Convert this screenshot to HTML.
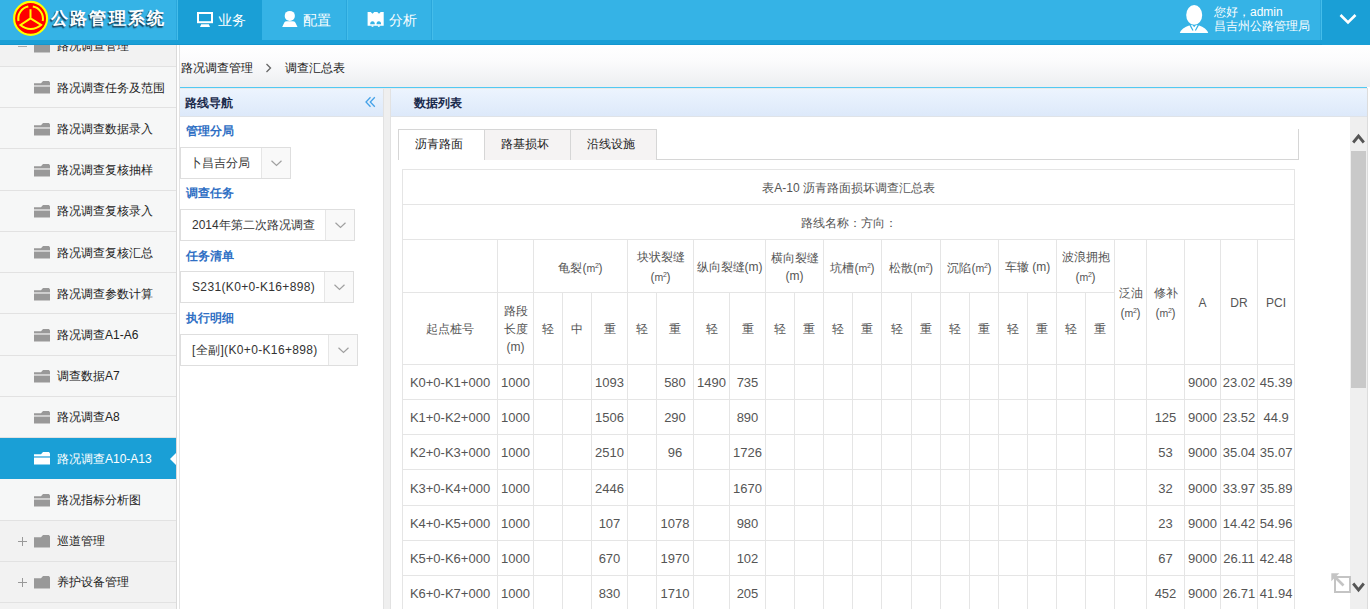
<!DOCTYPE html><html><head><meta charset="utf-8"><style>
*{box-sizing:border-box}
html,body{margin:0;padding:0}
body{width:1370px;height:609px;overflow:hidden;position:relative;background:#fff;font-family:"Liberation Sans",sans-serif;font-size:12px;color:#222}
div,span,svg{position:absolute}
.sep{top:0;height:40px;width:2px;border-left:1px solid #2aa7dc;background:#45bdea}
.nt{top:10px;height:20px;line-height:20px;color:#fff;font-size:14px;white-space:nowrap}
.row{left:0;width:176px;border-bottom:1px solid #e2e2e2;color:#222;white-space:nowrap}
.row span{left:57px;line-height:16px}
.child{background:#f6f7f7}
.par{background:#f2f2f2}
.act{background:#1a9fd6;color:#fff;border-bottom-color:#1a9fd6}
.lbl{left:186px;font-weight:bold;color:#2f6fc4;font-size:12px;line-height:14px}
.sel{left:180px;height:32px;border:1px solid #dedede;background:#fff}
.sel span{left:11px;top:8px;line-height:14px;font-size:12px;color:#333;white-space:nowrap}
.sel .btn{top:0;right:0;width:29px;height:30px;border-left:1px solid #e6e6e6;background:#f9f9f9}
.tab{top:129px;height:31px;border:1px solid #d6d6d6;border-bottom:0;background:#f5f3f3;font-size:12px;color:#222;line-height:29px;padding-left:16px}
table{position:absolute;left:402px;top:169px;border-collapse:collapse;table-layout:fixed;font-size:12px;color:#555}
td{border:1px solid #e5e5e5;text-align:center;padding:1px 0 0 0;overflow:hidden;line-height:18px}
.m2{font-style:normal;font-size:10.5px;letter-spacing:-0.3px}
.m2 b{font-weight:normal;font-size:7px;vertical-align:4px}
td.d{font-size:13px;padding-top:2px}
</style></head><body>
<div style="left:0;top:0;width:1370px;height:40px;background:#35b3e6"></div>
<div style="left:0;top:40px;width:1370px;height:5px;background:#1a9fd6;border-bottom:1px solid #1296cf"></div>
<div style="left:1322px;top:0;width:48px;height:45px;background:#1a9fd6"></div>
<div style="left:178px;top:0;width:84px;height:40px;background:#1a9fd6"></div>
<div class="sep" style="left:176px"></div>
<div class="sep" style="left:346px"></div>
<div class="sep" style="left:431px"></div>
<div class="sep" style="left:1320px"></div>
<svg style="left:0;top:0" width="60" height="40" viewBox="0 0 60 40">
<circle cx="30.6" cy="18.4" r="16.5" fill="#ff0000" stroke="#ffff00" stroke-width="2.1"/>
<g fill="none" stroke="#ffff00" stroke-width="2" stroke-linecap="butt">
<path d="M18.5 21 A12.2 12.2 0 0 1 28.3 6.6"/>
<path d="M32.8 6.6 A12.2 12.2 0 0 1 42.7 21"/>
<path d="M30.5 9.2 V18.4 L20.4 25 A15.7 15.7 0 0 0 41.1 25 L30.5 18.4"/>
</g></svg>
<div style="left:51px;top:9px;font-size:17px;line-height:20px;font-weight:bold;color:#fff;letter-spacing:2.2px;white-space:nowrap;text-shadow:-1px 1px 0 #1b4a64,-1px 2px 1px rgba(20,60,85,0.7)">公路管理系统</div>
<svg style="left:196px;top:11px" width="18" height="17" viewBox="0 0 18 17">
<rect x="2" y="2" width="14" height="9.2" fill="none" stroke="#fff" stroke-width="2"/>
<path d="M5.2 13.2 H12.8 L14 16 H4 Z" fill="#fff"/></svg>
<div class="nt" style="left:218px">业务</div>
<svg style="left:282px;top:10px" width="17" height="18" viewBox="0 0 17 18">
<ellipse cx="7.8" cy="5.9" rx="5.1" ry="5" fill="#fff"/><path d="M0.2 17 L2.3 12.6 Q3 11.2 4.8 11.2 H10.8 Q12.6 11.2 13.3 12.6 L15.5 17 Z" fill="#fff"/></svg>
<div class="nt" style="left:303px">配置</div>
<svg style="left:367px;top:12px" width="18" height="16" viewBox="0 0 18 16">
<path d="M0.6 0 H3.8 L5.5 1.8 L7.2 0 H10.3 L12 1.8 L13.7 0 H16.7 V13.7 H0.6 Z" fill="#fff"/>
<path d="M3.2 12.2 A2.3 2.9 0 0 1 7.8 12.2 Z M9.5 12.2 A2.3 2.9 0 0 1 14.1 12.2 Z" fill="#35b3e6"/>
<rect x="4.6" y="13.5" width="1.8" height="1.3" fill="#fff"/><rect x="10.9" y="13.5" width="1.8" height="1.3" fill="#fff"/></svg>
<div class="nt" style="left:389px">分析</div>
<svg style="left:1179px;top:4px" width="30" height="30" viewBox="0 0 30 30">
<ellipse cx="15.2" cy="11" rx="8" ry="9.9" fill="#fff"/>
<path d="M0.8 29 Q2.5 24 10.8 21.3 L15.2 21 L19.6 21.3 Q27.5 24 29.2 29 Z" fill="#fff"/>
<path d="M10.8 20.6 L14 26.5 M19.6 20.6 L16.4 26.5" fill="none" stroke="#35b3e6" stroke-width="1.2"/><path d="M13.2 20.8 L15.2 23.2 L17.2 20.8 Z" fill="#35b3e6"/></svg>
<div style="left:1214px;top:5px;color:#fff;font-size:12px;line-height:14px;white-space:nowrap">您好，admin</div>
<div style="left:1214px;top:19px;color:#fff;font-size:12px;line-height:14px;white-space:nowrap">昌吉州公路管理局</div>
<svg style="left:1339px;top:13px" width="18" height="12" viewBox="0 0 18 12">
<path d="M1.5 2 L9 9.5 L16.5 2" fill="none" stroke="#fff" stroke-width="2.6"/></svg>
<div style="left:0;top:45px;width:176px;height:564px;background:#f2f2f2;overflow:hidden">
<div class="row par" style="top:-19.23px;height:41.23px"><span style="top:12.61px">路况调查管理</span></div>
<div style="left:18px;top:0.9px;width:9px;height:1px;background:#aaa"></div>
<svg style="left:34px;top:-4.6px" width="16" height="13" viewBox="0 0 16 13"><path d="M0 2.2 H7 L9 0 H15 L16 1.4 V12.5 H0 Z" fill="#999"/></svg>
<div class="row child" style="top:22.00px;height:41.23px"><span style="top:12.61px">路况调查任务及范围</span></div>
<svg style="left:34px;top:36.3px" width="16" height="13" viewBox="0 0 16 13"><path d="M0 2.2 H7 L9 0 H15 L16 1.4 V4.2 H0 Z" fill="#999"/><rect x="0" y="4.2" width="16" height="1.8" fill="#cdcdcd"/><rect x="0" y="6" width="16" height="6.5" fill="#999"/></svg>
<div class="row child" style="top:63.23px;height:41.23px"><span style="top:12.61px">路况调查数据录入</span></div>
<svg style="left:34px;top:77.5px" width="16" height="13" viewBox="0 0 16 13"><path d="M0 2.2 H7 L9 0 H15 L16 1.4 V4.2 H0 Z" fill="#999"/><rect x="0" y="4.2" width="16" height="1.8" fill="#cdcdcd"/><rect x="0" y="6" width="16" height="6.5" fill="#999"/></svg>
<div class="row child" style="top:104.46px;height:41.23px"><span style="top:12.61px">路况调查复核抽样</span></div>
<svg style="left:34px;top:118.8px" width="16" height="13" viewBox="0 0 16 13"><path d="M0 2.2 H7 L9 0 H15 L16 1.4 V4.2 H0 Z" fill="#999"/><rect x="0" y="4.2" width="16" height="1.8" fill="#cdcdcd"/><rect x="0" y="6" width="16" height="6.5" fill="#999"/></svg>
<div class="row child" style="top:145.69px;height:41.23px"><span style="top:12.61px">路况调查复核录入</span></div>
<svg style="left:34px;top:160.0px" width="16" height="13" viewBox="0 0 16 13"><path d="M0 2.2 H7 L9 0 H15 L16 1.4 V4.2 H0 Z" fill="#999"/><rect x="0" y="4.2" width="16" height="1.8" fill="#cdcdcd"/><rect x="0" y="6" width="16" height="6.5" fill="#999"/></svg>
<div class="row child" style="top:186.92px;height:41.23px"><span style="top:12.61px">路况调查复核汇总</span></div>
<svg style="left:34px;top:201.2px" width="16" height="13" viewBox="0 0 16 13"><path d="M0 2.2 H7 L9 0 H15 L16 1.4 V4.2 H0 Z" fill="#999"/><rect x="0" y="4.2" width="16" height="1.8" fill="#cdcdcd"/><rect x="0" y="6" width="16" height="6.5" fill="#999"/></svg>
<div class="row child" style="top:228.15px;height:41.23px"><span style="top:12.61px">路况调查参数计算</span></div>
<svg style="left:34px;top:242.5px" width="16" height="13" viewBox="0 0 16 13"><path d="M0 2.2 H7 L9 0 H15 L16 1.4 V4.2 H0 Z" fill="#999"/><rect x="0" y="4.2" width="16" height="1.8" fill="#cdcdcd"/><rect x="0" y="6" width="16" height="6.5" fill="#999"/></svg>
<div class="row child" style="top:269.38px;height:41.23px"><span style="top:12.61px">路况调查A1-A6</span></div>
<svg style="left:34px;top:283.7px" width="16" height="13" viewBox="0 0 16 13"><path d="M0 2.2 H7 L9 0 H15 L16 1.4 V4.2 H0 Z" fill="#999"/><rect x="0" y="4.2" width="16" height="1.8" fill="#cdcdcd"/><rect x="0" y="6" width="16" height="6.5" fill="#999"/></svg>
<div class="row child" style="top:310.61px;height:41.23px"><span style="top:12.61px">调查数据A7</span></div>
<svg style="left:34px;top:324.9px" width="16" height="13" viewBox="0 0 16 13"><path d="M0 2.2 H7 L9 0 H15 L16 1.4 V4.2 H0 Z" fill="#999"/><rect x="0" y="4.2" width="16" height="1.8" fill="#cdcdcd"/><rect x="0" y="6" width="16" height="6.5" fill="#999"/></svg>
<div class="row child" style="top:351.84px;height:41.23px"><span style="top:12.61px">路况调查A8</span></div>
<svg style="left:34px;top:366.2px" width="16" height="13" viewBox="0 0 16 13"><path d="M0 2.2 H7 L9 0 H15 L16 1.4 V4.2 H0 Z" fill="#999"/><rect x="0" y="4.2" width="16" height="1.8" fill="#cdcdcd"/><rect x="0" y="6" width="16" height="6.5" fill="#999"/></svg>
<div class="row act" style="top:393.07px;height:41.23px"><span style="top:12.61px">路况调查A10-A13</span></div>
<svg style="left:34px;top:407.4px" width="16" height="13" viewBox="0 0 16 13"><path d="M0 2.2 H7 L9 0 H15 L16 1.4 V4.2 H0 Z" fill="#fff"/><rect x="0" y="4.2" width="16" height="1.8" fill="#7cc6ea"/><rect x="0" y="6" width="16" height="6.5" fill="#fff"/></svg>
<div class="row child" style="top:434.30px;height:41.23px"><span style="top:12.61px">路况指标分析图</span></div>
<svg style="left:34px;top:448.6px" width="16" height="13" viewBox="0 0 16 13"><path d="M0 2.2 H7 L9 0 H15 L16 1.4 V4.2 H0 Z" fill="#999"/><rect x="0" y="4.2" width="16" height="1.8" fill="#cdcdcd"/><rect x="0" y="6" width="16" height="6.5" fill="#999"/></svg>
<div class="row par" style="top:475.53px;height:41.23px"><span style="top:12.61px">巡道管理</span></div>
<div style="left:18px;top:495.6px;width:9px;height:1px;background:#999"></div>
<div style="left:22px;top:491.6px;width:1px;height:9px;background:#999"></div>
<svg style="left:34px;top:489.6px" width="16" height="13" viewBox="0 0 16 13"><path d="M0 2.2 H7 L9 0 H15 L16 1.4 V12.5 H0 Z" fill="#999"/></svg>
<div class="row par" style="top:516.76px;height:41.23px"><span style="top:12.61px">养护设备管理</span></div>
<div style="left:18px;top:536.9px;width:9px;height:1px;background:#999"></div>
<div style="left:22px;top:532.9px;width:1px;height:9px;background:#999"></div>
<svg style="left:34px;top:530.9px" width="16" height="13" viewBox="0 0 16 13"><path d="M0 2.2 H7 L9 0 H15 L16 1.4 V12.5 H0 Z" fill="#999"/></svg>
<div class="row par" style="top:557.99px;height:41.23px"><span style="top:12.61px"></span></div>
<svg style="left:170px;top:407.7px" width="6" height="12" viewBox="0 0 6 12"><path d="M6 0 L0 6 L6 12 Z" fill="#fff"/></svg>
</div>
<div style="left:176px;top:45px;width:1px;height:564px;background:#dadada"></div>
<div style="left:177px;top:45px;width:2px;height:564px;background:#fff"></div>
<div style="left:179px;top:45px;width:1px;height:564px;background:#e3e3e3"></div>
<div style="left:180px;top:45px;width:1190px;height:42px;background:linear-gradient(#ffffff,#fbfbfc 40%,#eceef1)"></div>
<div style="left:181px;top:61px;line-height:14px;white-space:nowrap">路况调查管理</div>
<svg style="left:265px;top:63px" width="8" height="10" viewBox="0 0 8 10"><path d="M1.5 1 L5.5 5 L1.5 9" fill="none" stroke="#666" stroke-width="1.3"/></svg>
<div style="left:285px;top:61px;line-height:14px;white-space:nowrap">调查汇总表</div>
<div style="left:180px;top:87px;width:1187px;height:1px;background:#52c9f3"></div>
<div style="left:180px;top:88px;width:1190px;height:521px;background:#e9e9e9"></div>
<div style="left:180px;top:89px;width:203px;height:520px;background:#fff"></div>
<div style="left:180px;top:89px;width:203px;height:28px;background:linear-gradient(#ecf4fe,#dde9fa);border-bottom:1px solid #dfe3e8"></div>
<div style="left:185px;top:96px;font-weight:bold;color:#1a2a4c;line-height:14px">路线导航</div>
<svg style="left:365px;top:96px" width="12" height="12" viewBox="0 0 12 12"><path d="M5.5 1.3 L1 6 L5.5 10.7 M9.8 1.3 L5.3 6 L9.8 10.7" fill="none" stroke="#45a2e8" stroke-width="1.3"/></svg>
<div class="lbl" style="top:124px">管理分局</div>
<div class="lbl" style="top:186px">调查任务</div>
<div class="lbl" style="top:249px">任务清单</div>
<div class="lbl" style="top:311px">执行明细</div>
<div class="sel" style="top:147px;width:111px"><span style="left:9px">卜昌吉分局</span><div class="btn"></div></div>
<svg style="left:271px;top:160px" width="11" height="7" viewBox="0 0 11 7"><path d="M0.5 0.8 L5.5 5.5 L10.5 0.8" fill="none" stroke="#a0a0a0" stroke-width="1.2"/></svg>
<div class="sel" style="top:209px;width:175px"><span>2014年第二次路况调查</span><div class="btn"></div></div>
<svg style="left:335px;top:222px" width="11" height="7" viewBox="0 0 11 7"><path d="M0.5 0.8 L5.5 5.5 L10.5 0.8" fill="none" stroke="#a0a0a0" stroke-width="1.2"/></svg>
<div class="sel" style="top:271px;width:174px"><span style="letter-spacing:0.35px">S231(K0+0-K16+898)</span><div class="btn"></div></div>
<svg style="left:334px;top:284px" width="11" height="7" viewBox="0 0 11 7"><path d="M0.5 0.8 L5.5 5.5 L10.5 0.8" fill="none" stroke="#a0a0a0" stroke-width="1.2"/></svg>
<div class="sel" style="top:334px;width:178px"><span style="letter-spacing:0.35px">[全副](K0+0-K16+898)</span><div class="btn"></div></div>
<svg style="left:338px;top:347px" width="11" height="7" viewBox="0 0 11 7"><path d="M0.5 0.8 L5.5 5.5 L10.5 0.8" fill="none" stroke="#a0a0a0" stroke-width="1.2"/></svg>
<div style="left:383px;top:89px;width:1px;height:520px;background:#e2e2e2"></div>
<div style="left:384px;top:89px;width:6px;height:520px;background:#efefef"></div>
<div style="left:390px;top:89px;width:1px;height:520px;background:#e2e2e2"></div>
<div style="left:391px;top:89px;width:976px;height:520px;background:#fff"></div>
<div style="left:391px;top:89px;width:976px;height:28px;background:linear-gradient(#ecf4fe,#dde9fa);border-bottom:1px solid #dfe3e8"></div>
<div style="left:414px;top:96px;font-weight:bold;color:#1a2a4c;line-height:14px">数据列表</div>
<div style="left:1367px;top:88px;width:1px;height:521px;background:#dcdcdc"></div>
<div style="left:1368px;top:88px;width:2px;height:521px;background:#fff"></div>
<div style="left:656px;top:159px;width:643px;height:1px;background:#d6d6d6"></div>
<div style="left:1298px;top:129px;width:1px;height:31px;background:#d6d6d6"></div>
<div class="tab" style="left:398px;width:87px;background:#fff">沥青路面</div>
<div class="tab" style="left:484px;width:87px">路基损坏</div>
<div class="tab" style="left:570px;width:87px">沿线设施</div>
<table style="width:893px"><colgroup><col style="width:95px"><col style="width:36px"><col style="width:29px"><col style="width:29px"><col style="width:36px"><col style="width:29px"><col style="width:37px"><col style="width:36px"><col style="width:36px"><col style="width:29px"><col style="width:29px"><col style="width:29px"><col style="width:29px"><col style="width:30px"><col style="width:29px"><col style="width:29px"><col style="width:29px"><col style="width:29px"><col style="width:29px"><col style="width:29px"><col style="width:29px"><col style="width:32px"><col style="width:38px"><col style="width:36px"><col style="width:37px"><col style="width:37px"></colgroup><tr style="height:35px"><td colspan="26">表A-10 沥青路面损坏调查汇总表</td></tr><tr style="height:35px"><td colspan="26">路线名称：方向：</td></tr><tr style="height:53px"><td></td><td></td><td colspan="3">龟裂(<i class="m2">m<b>2</b></i>)</td><td colspan="2">块状裂缝<br>(<i class="m2">m<b>2</b></i>)</td><td colspan="2">纵向裂缝(m)</td><td colspan="2">横向裂缝<br>(m)</td><td colspan="2">坑槽(<i class="m2">m<b>2</b></i>)</td><td colspan="2">松散(<i class="m2">m<b>2</b></i>)</td><td colspan="2">沉陷(<i class="m2">m<b>2</b></i>)</td><td colspan="2">车辙 (m)</td><td colspan="2">波浪拥抱<br>(<i class="m2">m<b>2</b></i>)</td><td rowspan="2">泛油<br>(<i class="m2">m<b>2</b></i>)</td><td rowspan="2">修补<br>(<i class="m2">m<b>2</b></i>)</td><td rowspan="2">A</td><td rowspan="2">DR</td><td rowspan="2">PCI</td></tr><tr style="height:72px"><td>起点桩号</td><td>路段<br>长度<br>(m)</td><td>轻</td><td>中</td><td>重</td><td>轻</td><td>重</td><td>轻</td><td>重</td><td>轻</td><td>重</td><td>轻</td><td>重</td><td>轻</td><td>重</td><td>轻</td><td>重</td><td>轻</td><td>重</td><td>轻</td><td>重</td></tr><tr style="height:35.17px"><td class="d">K0+0-K1+000</td><td class="d">1000</td><td class="d"></td><td class="d"></td><td class="d">1093</td><td class="d"></td><td class="d">580</td><td class="d">1490</td><td class="d">735</td><td class="d"></td><td class="d"></td><td class="d"></td><td class="d"></td><td class="d"></td><td class="d"></td><td class="d"></td><td class="d"></td><td class="d"></td><td class="d"></td><td class="d"></td><td class="d"></td><td class="d"></td><td class="d"></td><td class="d">9000</td><td class="d">23.02</td><td class="d">45.39</td></tr><tr style="height:35.17px"><td class="d">K1+0-K2+000</td><td class="d">1000</td><td class="d"></td><td class="d"></td><td class="d">1506</td><td class="d"></td><td class="d">290</td><td class="d"></td><td class="d">890</td><td class="d"></td><td class="d"></td><td class="d"></td><td class="d"></td><td class="d"></td><td class="d"></td><td class="d"></td><td class="d"></td><td class="d"></td><td class="d"></td><td class="d"></td><td class="d"></td><td class="d"></td><td class="d">125</td><td class="d">9000</td><td class="d">23.52</td><td class="d">44.9</td></tr><tr style="height:35.17px"><td class="d">K2+0-K3+000</td><td class="d">1000</td><td class="d"></td><td class="d"></td><td class="d">2510</td><td class="d"></td><td class="d">96</td><td class="d"></td><td class="d">1726</td><td class="d"></td><td class="d"></td><td class="d"></td><td class="d"></td><td class="d"></td><td class="d"></td><td class="d"></td><td class="d"></td><td class="d"></td><td class="d"></td><td class="d"></td><td class="d"></td><td class="d"></td><td class="d">53</td><td class="d">9000</td><td class="d">35.04</td><td class="d">35.07</td></tr><tr style="height:35.17px"><td class="d">K3+0-K4+000</td><td class="d">1000</td><td class="d"></td><td class="d"></td><td class="d">2446</td><td class="d"></td><td class="d"></td><td class="d"></td><td class="d">1670</td><td class="d"></td><td class="d"></td><td class="d"></td><td class="d"></td><td class="d"></td><td class="d"></td><td class="d"></td><td class="d"></td><td class="d"></td><td class="d"></td><td class="d"></td><td class="d"></td><td class="d"></td><td class="d">32</td><td class="d">9000</td><td class="d">33.97</td><td class="d">35.89</td></tr><tr style="height:35.17px"><td class="d">K4+0-K5+000</td><td class="d">1000</td><td class="d"></td><td class="d"></td><td class="d">107</td><td class="d"></td><td class="d">1078</td><td class="d"></td><td class="d">980</td><td class="d"></td><td class="d"></td><td class="d"></td><td class="d"></td><td class="d"></td><td class="d"></td><td class="d"></td><td class="d"></td><td class="d"></td><td class="d"></td><td class="d"></td><td class="d"></td><td class="d"></td><td class="d">23</td><td class="d">9000</td><td class="d">14.42</td><td class="d">54.96</td></tr><tr style="height:35.17px"><td class="d">K5+0-K6+000</td><td class="d">1000</td><td class="d"></td><td class="d"></td><td class="d">670</td><td class="d"></td><td class="d">1970</td><td class="d"></td><td class="d">102</td><td class="d"></td><td class="d"></td><td class="d"></td><td class="d"></td><td class="d"></td><td class="d"></td><td class="d"></td><td class="d"></td><td class="d"></td><td class="d"></td><td class="d"></td><td class="d"></td><td class="d"></td><td class="d">67</td><td class="d">9000</td><td class="d">26.11</td><td class="d">42.48</td></tr><tr style="height:35.17px"><td class="d">K6+0-K7+000</td><td class="d">1000</td><td class="d"></td><td class="d"></td><td class="d">830</td><td class="d"></td><td class="d">1710</td><td class="d"></td><td class="d">205</td><td class="d"></td><td class="d"></td><td class="d"></td><td class="d"></td><td class="d"></td><td class="d"></td><td class="d"></td><td class="d"></td><td class="d"></td><td class="d"></td><td class="d"></td><td class="d"></td><td class="d"></td><td class="d">452</td><td class="d">9000</td><td class="d">26.71</td><td class="d">41.94</td></tr></table>
<div style="left:1350px;top:117px;width:17px;height:492px;background:#efefef"></div>
<div style="left:1351px;top:151px;width:15px;height:237px;background:#c9c9c9"></div>
<svg style="left:1352px;top:133px" width="13" height="11" viewBox="0 0 13 11"><path d="M1.2 9.5 L6.5 3 L11.8 9.5" fill="none" stroke="#555" stroke-width="2.8"/></svg>
<svg style="left:1352px;top:582px" width="13" height="11" viewBox="0 0 13 11"><path d="M1.2 1.5 L6.5 8 L11.8 1.5" fill="none" stroke="#555" stroke-width="2.8"/></svg>
<svg style="left:1330px;top:572px" width="22" height="22" viewBox="0 0 22 22">
<rect x="5" y="5" width="15" height="15" fill="none" stroke="#c4c4c4" stroke-width="2"/>
<path d="M13.5 13.5 L4 4" stroke="#c4c4c4" stroke-width="2.6"/><path d="M1.3 1.3 H9.3 L1.3 9.3 Z" fill="#c4c4c4"/></svg>
</body></html>
